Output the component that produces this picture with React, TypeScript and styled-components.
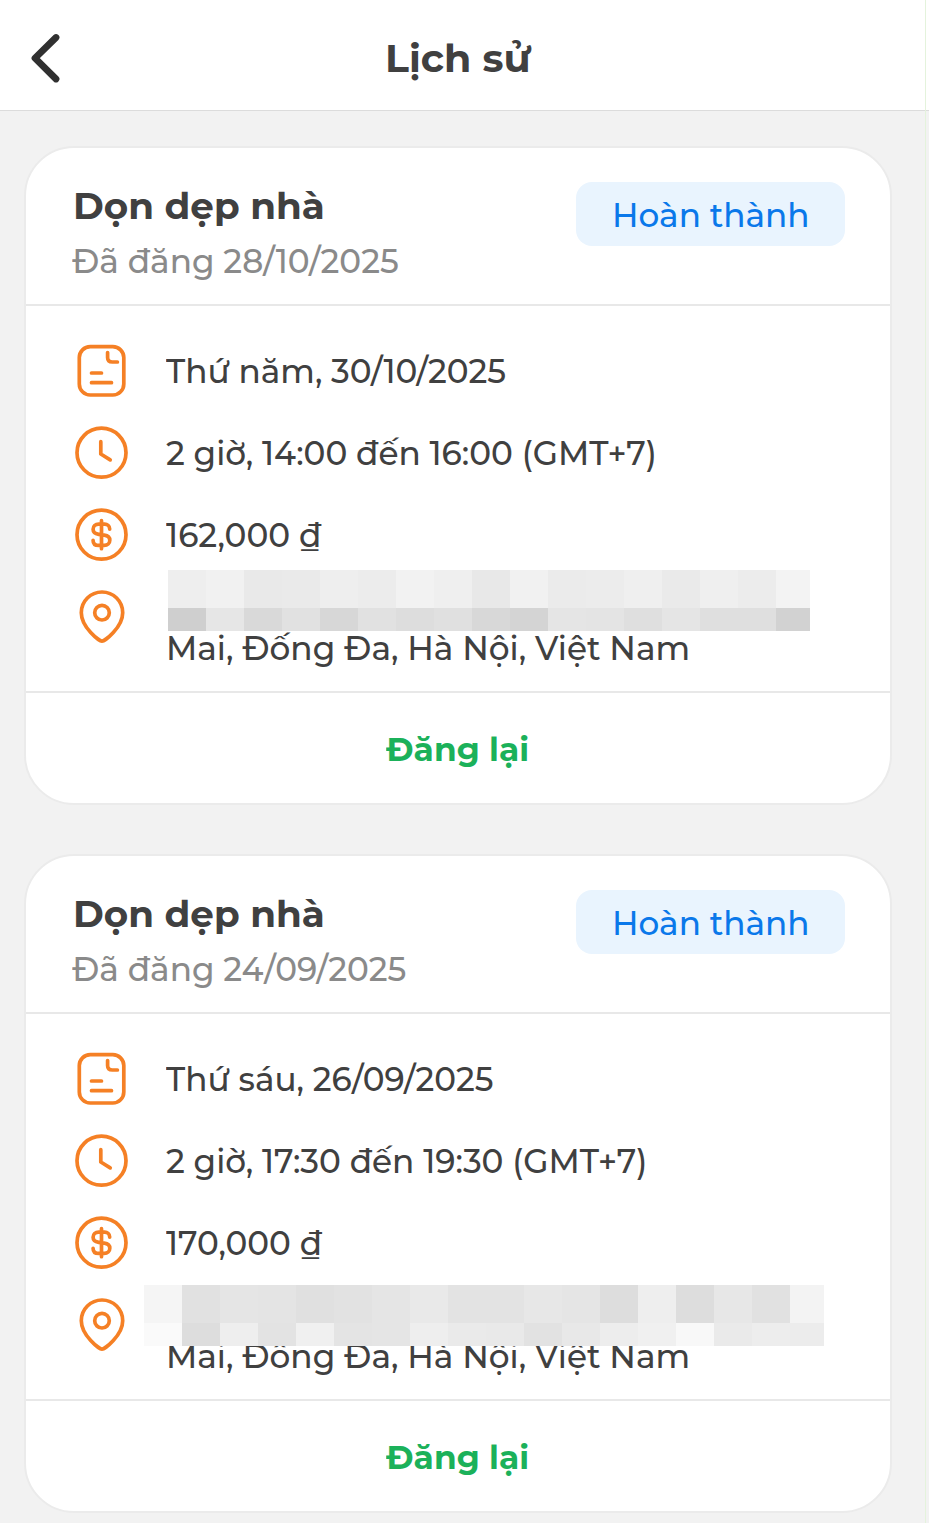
import React, { useLayoutEffect, useRef, useState } from 'react';
import styled, { createGlobalStyle } from 'styled-components';

const GlobalStyle = createGlobalStyle`
  * { box-sizing: border-box; }
  body { margin: 0; background: #f2f2f2; }
`;

const Screen = styled.div`
  position: relative;
  width: 929px;
  height: 1523px;
  overflow: hidden;
  background: #f2f2f2;
  font-family: Montserrat, Inter, 'Noto Sans', sans-serif;
  color: #404040;
`;

const EdgeLine = styled.div`
  position: absolute;
  top: 0;
  right: 3px;
  width: 1px;
  height: 100%;
  background: #e4f3dc;
`;

const Header = styled.header`
  width: 929px;
  height: 111px;
  display: flex;
  align-items: center;
  background: #fff;
  border-bottom: 1px solid #dcdcdc;
`;

const BackButton = styled.button`
  width: 92px;
  height: 110px;
  padding: 6px 0 0 0;
  border: 0;
  background: none;
  svg { display: block; }
`;

const HeaderTitle = styled.h1`
  margin: 6px 0 0 293px;
  font-size: 39px;
  line-height: 48px;
  font-weight: 700;
`;

const List = styled.main`
  display: flex;
  flex-direction: column;
  gap: 49px;
  padding: 35px 0 0 24px;
`;

const Card = styled.article`
  position: relative;
  width: 868px;
  height: 659px;
  flex: none;
  background: #fff;
  border: 2px solid #ebebeb;
  border-radius: 50px;
`;

const CardHead = styled.div`
  height: 158px;
  display: flex;
  justify-content: space-between;
  padding: 34px 45px 0 47px;
  border-bottom: 2px solid #e8e8e8;
`;

const CardTitle = styled.h2`
  margin: 0;
  font-size: 37px;
  line-height: 48px;
  font-weight: 700;
`;

const Posted = styled.p`
  margin: 8px 0 0 -1px;
  font-size: 33px;
  line-height: 46px;
  font-weight: 500;
  color: #8a8a8a;
`;

const Badge = styled.span`
  width: 269px;
  height: 64px;
  padding-left: 36px;
  border-radius: 16px;
  background: #e9f4fe;
  color: #0a78ea;
  font-size: 33px;
  line-height: 66px;
  font-weight: 500;
`;

const Details = styled.div`
  height: 387px;
  padding: 24px 0 0 47px;
  border-bottom: 2px solid #e8e8e8;
`;

const Row = styled.div`
  height: 82px;
  display: flex;
  align-items: center;
  font-size: 33px;
  line-height: 46px;
  font-weight: 500;
  svg { margin-right: 37px; flex: none; }
`;

const Address = styled.div`
  padding-top: 62px;
`;

const Repost = styled.button`
  width: 100%;
  height: 108px;
  padding: 4px 0 0 360px;
  border: 0;
  background: none;
  color: #1bb15a;
  font: inherit;
  font-size: 33px;
  font-weight: 700;
  text-align: left;
`;

const Mosaic = styled.div<{ $x: number; $y: number; $w: number }>`
  position: absolute;
  left: ${(p) => p.$x}px;
  top: ${(p) => p.$y}px;
  width: ${(p) => p.$w}px;
  overflow: hidden;
`;

const MosaicRow = styled.div<{ $h: number }>`
  display: flex;
  height: ${(p) => p.$h}px;
`;

const Tile = styled.i<{ $c: string }>`
  flex: 0 0 38px;
  background: ${(p) => `#${p.$c}${p.$c}${p.$c}`};
`;

const Stretch = styled.span`
  display: inline-block;
  white-space: nowrap;
  transform-origin: 0 50%;
`;

/* Widens a line of text so that it fills exactly the given width. */
function Fit({ width, children }: { width: number; children: string }) {
  const ref = useRef<HTMLSpanElement>(null);
  const [scale, setScale] = useState(1);
  useLayoutEffect(() => {
    if (ref.current) setScale(width / ref.current.offsetWidth);
  }, [width, children]);
  return (
    <Stretch ref={ref} style={{ transform: `scaleX(${scale})` }}>
      {children}
    </Stretch>
  );
}

const ORANGE = '#f58025';

const iconProps = {
  width: 56,
  height: 56,
  viewBox: '0 0 56 56',
  fill: 'none',
  stroke: ORANGE,
  strokeWidth: 3.7,
  strokeLinecap: 'round' as const,
  strokeLinejoin: 'round' as const,
};

const NoteIcon = () => (
  <svg {...iconProps}>
    <rect x="6.3" y="3.6" width="44.5" height="48.4" rx="11" />
    <path d="M34.6 9.5V14.5Q34.6 19 39.3 19H44.4M18.5 30h10M18.5 39.7h20" />
  </svg>
);

const ClockIcon = () => (
  <svg {...iconProps}>
    <circle cx="28.5" cy="27.7" r="24.5" />
    <path d="M27.8 16.7v12.3l9.4 5.9" />
  </svg>
);

const DollarIcon = () => (
  <svg {...iconProps}>
    <circle cx="28.5" cy="27.7" r="24.5" />
    <path d="M28.5 13.7v28M36.7 22.1c0-3.400-2.600-4.900-5-4.900h-6c-3.500 0-5.600 2.200-5.600 5.100 0 3.200 2.200 4.600 5.600 5.100l5.600.8c3.400.5 5.500 2 5.500 5.100 0 2.900-2.300 5.100-5.600 5.100h-5.500c-3.400 0-5.600-1.800-5.600-5" />
  </svg>
);

const PinIcon = () => (
  <svg {...iconProps}>
    <path d="M29 52.200C26.500 52.200 8.300 38.500 8.300 23.700A20.700 20.700 0 0 1 49.700 23.700C49.700 38.500 31.500 52.200 29 52.200z" />
    <circle cx="29" cy="23.7" r="7.3" />
  </svg>
);

type Job = {
  posted: [string, number];
  day: [string, number];
  time: [string, number];
  price: [string, number];
  mosaic: { x: number; y: number; w: number; rows: string[] };
};

const jobs: Job[] = [
  {
    posted: ['Đã đăng 28/10/2025', 326.5],
    day: ['Thứ năm, 30/10/2025', 340.5],
    time: ['2 giờ, 14:00 đến 16:00 (GMT+7)', 491],
    price: ['162,000 ₫', 155],
    mosaic: {
      x: 142,
      y: 422,
      w: 642,
      rows: [
        'ee f1 e9 ea ee ec f2 ef e8 f1 eb ec ef ea ef ec f3',
        'cf e6 d9 e1 d7 e1 dd e0 d8 d4 e5 e4 df e5 df df d2',
      ],
    },
  },
  {
    posted: ['Đã đăng 24/09/2025', 334.5],
    day: ['Thứ sáu, 26/09/2025', 327.5],
    time: ['2 giờ, 17:30 đến 19:30 (GMT+7)', 481],
    price: ['170,000 ₫', 155.5],
    mosaic: {
      x: 118,
      y: 429,
      w: 680,
      rows: [
        'f5 e1 e5 e4 e0 e2 e5 e9 e3 e3 e7 e5 dd ee dd e7 e1 f3',
        'fa dd ee e3 f0 e4 e5 ee ea e9 e2 e8 ed f0 f8 ea ed ec',
      ],
    },
  },
];

const JobCard = ({ job }: { job: Job }) => (
  <Card>
    <CardHead>
      <div>
        <CardTitle><Fit width={252}>Dọn dẹp nhà</Fit></CardTitle>
        <Posted><Fit width={job.posted[1]}>{job.posted[0]}</Fit></Posted>
      </div>
      <Badge><Fit width={197}>Hoàn thành</Fit></Badge>
    </CardHead>
    <Details>
      <Row><NoteIcon /><Fit width={job.day[1]}>{job.day[0]}</Fit></Row>
      <Row><ClockIcon /><Fit width={job.time[1]}>{job.time[0]}</Fit></Row>
      <Row><DollarIcon /><Fit width={job.price[1]}>{job.price[0]}</Fit></Row>
      <Row>
        <PinIcon />
        <Address><Fit width={524}>Mai, Đống Đa, Hà Nội, Việt Nam</Fit></Address>
      </Row>
    </Details>
    <Repost><Fit width={143.5}>Đăng lại</Fit></Repost>
    <Mosaic $x={job.mosaic.x} $y={job.mosaic.y} $w={job.mosaic.w}>
      {job.mosaic.rows.map((row, r) => (
        <MosaicRow key={r} $h={r === 0 ? 38 : 23}>
          {row.split(' ').map((c, i) => <Tile key={i} $c={c} />)}
        </MosaicRow>
      ))}
    </Mosaic>
  </Card>
);

export default function App() {
  return (
    <>
      <GlobalStyle />
      <Screen>
        <Header>
          <BackButton aria-label="Quay lại">
            <svg width="92" height="60" viewBox="0 0 92 60" fill="none" stroke="#303030" strokeWidth="6.8" strokeLinecap="round" strokeLinejoin="round">
              <path d="M56 9.5L35 30.2L56 51" />
            </svg>
          </BackButton>
          <HeaderTitle><Fit width={146}>Lịch sử</Fit></HeaderTitle>
        </Header>
        <List>
          {jobs.map((job) => <JobCard key={job.posted[0]} job={job} />)}
        </List>
        <EdgeLine />
      </Screen>
    </>
  );
}
